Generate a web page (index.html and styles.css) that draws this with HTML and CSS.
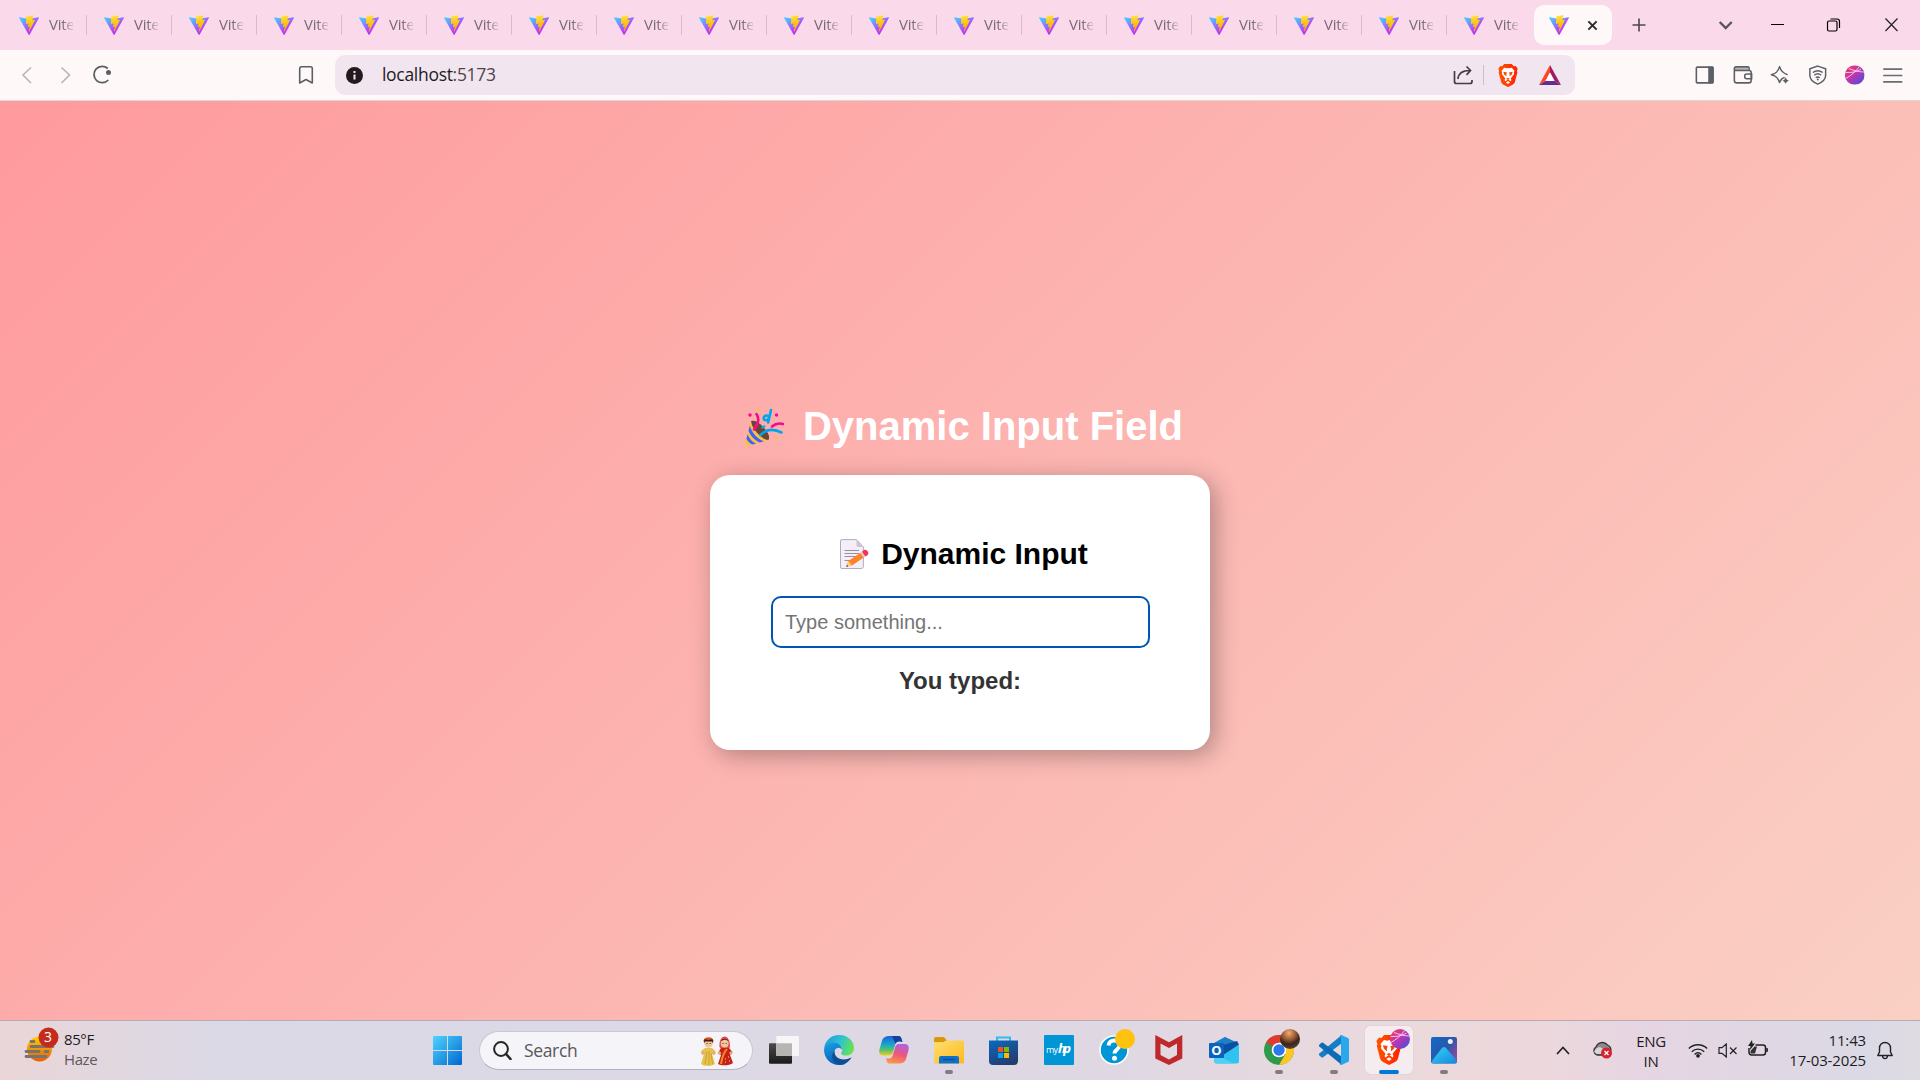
FILE: index.html
```html
<!DOCTYPE html>
<html lang="en">
<head>
<meta charset="utf-8">
<title>Dynamic Input Field</title>
<link rel="stylesheet" href="styles.css">
</head>
<body>
<svg class="defs" aria-hidden="true">
  <defs>
    <linearGradient id="va" x1="0" y1=".08" x2=".58" y2=".78"><stop stop-color="#41d1ff"/><stop offset="1" stop-color="#bd34fe"/></linearGradient>
    <linearGradient id="vb" x1=".43" y1=".02" x2=".5" y2=".89"><stop stop-color="#ffea83"/><stop offset=".083" stop-color="#ffdd35"/><stop offset="1" stop-color="#ffa800"/></linearGradient>
    <linearGradient id="orb" x1="0" y1="0" x2="1" y2="1"><stop stop-color="#ff3c5c"/><stop offset=".5" stop-color="#b637b4"/><stop offset="1" stop-color="#394fe0"/></linearGradient>
    <linearGradient id="win" x1="0" y1="0" x2="1" y2="1"><stop stop-color="#4fd4ff"/><stop offset="1" stop-color="#0067cf"/></linearGradient>
    <linearGradient id="brv" x1="0" y1="0" x2="1" y2="0"><stop stop-color="#ff5500"/><stop offset="1" stop-color="#ff2000"/></linearGradient>
    <symbol id="vite" viewBox="0 0 256 257">
      <path fill="url(#va)" d="M255.153 37.938L134.897 252.976c-2.483 4.44-8.862 4.466-11.382.048L.875 37.958c-2.746-4.814 1.371-10.646 6.827-9.67l120.385 21.517a6.537 6.537 0 0 0 2.322-.004l117.867-21.483c5.438-.991 9.574 4.796 6.877 9.62Z"/>
      <path fill="url(#vb)" d="M185.432.063L96.44 17.501a3.268 3.268 0 0 0-2.634 3.014l-5.474 92.456a3.268 3.268 0 0 0 3.997 3.378l24.777-5.718c2.318-.535 4.413 1.507 3.936 3.838l-7.361 36.047c-.495 2.426 1.782 4.5 4.151 3.78l15.304-4.649c2.372-.72 4.652 1.36 4.15 3.788l-11.698 56.621c-.732 3.542 3.979 5.473 5.943 2.437l1.313-2.028l72.516-144.72c1.215-2.423-.88-5.186-3.54-4.672l-25.505 4.922c-2.396.462-4.435-1.77-3.759-4.114l16.646-57.705c.677-2.35-1.37-4.583-3.769-4.113Z"/>
    </symbol>
    <symbol id="brave" viewBox="0 0 26 30">
      <path fill="url(#brv)" d="M8 0h10l2.500 3 2.500-.4L25.600 6l-1 3 .6 2-3.200 12.200c-.5 1.700-1.500 2.800-3 3.800L13 30l-6-3c-1.500-1-2.500-2.100-3-3.800L.8 11l.6-2-1-3L3 2.600l2.500.4z"/>
      <path fill="#fff" d="M8 5l3.500.7 1.500-.6 1.500.6L18 5l3.500 4-1 2 .6 2.200-4.600 5.600 1 2.200-1 1.600-2-1.500-1.500-.6-1.500.6-2 1.500-1-1.600 1-2.200-4.600-5.600.6-2.200-1-2z"/>
      <path fill="#ff4200" d="M7 10.200l4.700.9-.9 2.300.4 3L7.800 13.500zM19 10.200l-4.700.9.900 2.300-.4 3 3.400-2.900zM10.600 19.200l2.400-1.200 2.400 1.200-2.400 1.700z"/>
      <path fill="#fff" d="M10.300 24l2.700-1.700 2.700 1.700-2.700 2z"/>
    </symbol>
    <symbol id="sphere" viewBox="0 0 20 20">
      <circle cx="10" cy="10" r="10" fill="url(#orb)"/>
      <path d="M1 13.500C6 10.500 11 7 14.500 1.500M4 3.500c4 1.500 10 3.500 15.300 3.500M.5 7.500c6 .3 12-.7 16-3.500" fill="none" stroke="#ffd5ec" stroke-width=".9"/>
    </symbol>
  </defs>
</svg>

<header class="tab-strip">
  <div class="tab"><svg class="favicon"><use href="#vite"/></svg><span>Vite</span></div>
  <div class="tab"><svg class="favicon"><use href="#vite"/></svg><span>Vite</span></div>
  <div class="tab"><svg class="favicon"><use href="#vite"/></svg><span>Vite</span></div>
  <div class="tab"><svg class="favicon"><use href="#vite"/></svg><span>Vite</span></div>
  <div class="tab"><svg class="favicon"><use href="#vite"/></svg><span>Vite</span></div>
  <div class="tab"><svg class="favicon"><use href="#vite"/></svg><span>Vite</span></div>
  <div class="tab"><svg class="favicon"><use href="#vite"/></svg><span>Vite</span></div>
  <div class="tab"><svg class="favicon"><use href="#vite"/></svg><span>Vite</span></div>
  <div class="tab"><svg class="favicon"><use href="#vite"/></svg><span>Vite</span></div>
  <div class="tab"><svg class="favicon"><use href="#vite"/></svg><span>Vite</span></div>
  <div class="tab"><svg class="favicon"><use href="#vite"/></svg><span>Vite</span></div>
  <div class="tab"><svg class="favicon"><use href="#vite"/></svg><span>Vite</span></div>
  <div class="tab"><svg class="favicon"><use href="#vite"/></svg><span>Vite</span></div>
  <div class="tab"><svg class="favicon"><use href="#vite"/></svg><span>Vite</span></div>
  <div class="tab"><svg class="favicon"><use href="#vite"/></svg><span>Vite</span></div>
  <div class="tab"><svg class="favicon"><use href="#vite"/></svg><span>Vite</span></div>
  <div class="tab"><svg class="favicon"><use href="#vite"/></svg><span>Vite</span></div>
  <div class="tab last"><svg class="favicon"><use href="#vite"/></svg><span>Vite</span></div>
  <div class="tab active"><svg class="favicon"><use href="#vite"/></svg>
    <svg class="close" viewBox="0 0 12 12"><path d="M1.500 1.500l9 9m0-9l-9 9" stroke="#2b2b2b" stroke-width="2.200"/></svg></div>
  <svg class="new-tab" viewBox="0 0 14 14"><path d="M7 .5v13M.5 7h13" stroke="#4d474b" stroke-width="1.600"/></svg>
  <div class="window-controls">
    <svg viewBox="0 0 48 50"><path d="M18.700 22l6 6 6-6" fill="none" stroke="#5a5459" stroke-width="2.400"/></svg>
    <svg viewBox="0 0 57 50"><path d="M22 24.500h13" stroke="#000" stroke-width="1"/></svg>
    <svg viewBox="0 0 57 50"><path d="M24.500 19h6.500a2.500 2.500 0 0 1 2.500 2.500V28" fill="none" stroke="#000" stroke-width="1.200"/><rect x="21.500" y="21" width="9.500" height="10" rx="1.500" fill="none" stroke="#000" stroke-width="1.200"/></svg>
    <svg viewBox="0 0 57 50"><path d="M22.500 18.500l12 12.500m0-12.500l-12 12.500" stroke="#222" stroke-width="1.200"/></svg>
  </div>
</header>

<nav class="toolbar">
  <div class="nav-buttons">
    <svg viewBox="0 0 38 50"><path d="M23 17.500l-8 7.500 8 8" fill="none" stroke="#bdb6b9" stroke-width="1.700"/></svg>
    <svg viewBox="0 0 38 50"><path d="M15.500 17.500l8 7.500-8 8" fill="none" stroke="#bdb6b9" stroke-width="1.700"/></svg>
    <svg viewBox="0 0 38 50"><path d="M23.800 18.500a8.200 8.200 0 1 0 .5 11.500" fill="none" stroke="#5b6067" stroke-width="1.800"/><circle cx="24.500" cy="22.500" r="2.500" fill="#5b6067"/></svg>
    <svg class="bookmark" viewBox="0 0 38 50"><path d="M12.700 33V18.500a1.700 1.700 0 0 1 1.700-1.700h9.200a1.700 1.700 0 0 1 1.700 1.700V33L19 29.500z" fill="none" stroke="#5b6067" stroke-width="1.600" stroke-linejoin="round"/></svg>
  </div>
  <div class="address">
    <svg class="info" viewBox="0 0 17 17"><circle cx="8.500" cy="8.500" r="8.500" fill="#231a1e"/><path d="M8.500 7.500v5M8.500 4v2" stroke="#f1e6ef" stroke-width="2"/></svg>
    <span class="url">localhost<span class="port">:5173</span></span>
    <svg class="share" viewBox="0 0 20 20"><path d="M1.500 6v10.500a2 2 0 0 0 2 2H17a2 2 0 0 0 2-2V15M5 14c.3-5 4-8.500 12-8.500M13.500 1.500l4 4-4 4.300" fill="none" stroke="#453d43" stroke-width="1.700"/></svg>
    <i class="rule"></i>
    <svg class="brave" viewBox="0 0 26 30"><use href="#brave"/></svg>
    <svg class="bat" viewBox="0 0 22 20"><path d="M11 0L0 20l6.500-4L11 7.500z" fill="#ff4724"/><path d="M11 0l11 20-6.500-4L11 7.500z" fill="#9e1f63"/><path d="M0 20h22l-6.500-4h-9z" fill="#662d91"/><path d="M11 7.500L15.500 16h-9z" fill="#fff"/></svg>
  </div>
  <div class="extensions">
    <svg viewBox="0 0 38 50"><rect x="10.500" y="17" width="17" height="16" rx="1" fill="none" stroke="#5b6067" stroke-width="1.600"/><path d="M22.500 16.500h5v17h-5z" fill="#5b6067"/></svg>
    <svg viewBox="0 0 38 50"><path d="M11 17.500h13.500v3H11z" fill="#b3b1b4"/><path d="M10.500 18.500v12a2.500 2.500 0 0 0 2.500 2.500h12a2.500 2.500 0 0 0 2.500-2.500V22.500a2 2 0 0 0-2-2H12a1.500 1.500 0 0 1-1.500-2 1.700 1.700 0 0 1 1.500-1.700h12a1.500 1.500 0 0 1 1.500 1.500v2M28 24h-5a2 2 0 0 0-2 2v.8a2 2 0 0 0 2 2h5z" fill="none" stroke="#5b6067" stroke-width="1.600"/></svg>
    <svg viewBox="0 0 38 50"><path d="M24 27.500c-2.500.6-4 2-5.200 5.200-1.400-4.800-3.300-6.700-8.300-8 5-1.400 6.900-3.300 8.300-8.200 1.400 4.900 3.300 6.800 8.200 8.200" fill="none" stroke="#5b6067" stroke-width="1.500" stroke-linejoin="round"/><path d="M25 27c.7 2.500 1.200 3 3.500 3.700-2.300.7-2.800 1.200-3.500 3.500-.7-2.300-1.200-2.800-3.500-3.500 2.300-.7 2.800-1.200 3.500-3.700z" fill="#5b6067"/></svg>
    <svg viewBox="0 0 38 50"><path d="M19 16l8 2.800v6.500c0 4.400-3.300 7-8 9-4.700-2-8-4.600-8-9v-6.500zM14 22.500c3-2.300 7-2.300 10 0M15.500 25.200c2-1.700 5-1.700 7 0M17 27.800c1.200-1 2.800-1 4 0" fill="none" stroke="#5b6067" stroke-width="1.500"/><circle cx="19" cy="29.500" r="1" fill="#5b6067"/></svg>
    <svg viewBox="0 0 38 50"><use href="#sphere" x="9" y="15" width="20" height="20"/></svg>
    <svg viewBox="0 0 38 50"><path d="M10 19h18M10 25.500h18M10 32h18" stroke="#686c72" stroke-width="1.700" stroke-linecap="round"/></svg>
  </div>
</nav>

<main class="page">
  <h1>
    <svg class="party" viewBox="0 0 39 38">
      <path d="M6 13.500c2-1.800 8 1 12.500 6s7 10.500 4.500 12.500z" fill="#6d4534"/>
      <path d="M6 13.500L.2 34.500c-.6 2.300.8 3.600 3 3L24 32c-5 .500-18-10-18-18.500z" fill="#f9c23c"/>
      <path d="M4.800 17.500c1.500 6.500 8 14 14 15.800l-4 1.200C9.500 32.500 4.500 26.500 3.500 22.500zM2.600 26.200c1.300 4 4.400 7.500 8.400 9.300l-3.600 1c-2.700-1.200-5-3.500-6-5.800z" fill="#3f5fff"/>
      <path d="M6.300 13.200c3-1.500 8 1.500 12.500 6.500s6.500 9.800 4.500 12c-4 1.500-17-10-17-18.500z" fill="#6d4534"/>
      <path d="M11.500 6c3 4.500 1.500 10.500-2.500 15.500M27 18.500c3-2.600 7-3.500 11-2.500" fill="none" stroke="#f70a8d" stroke-width="2.600" stroke-linecap="round"/>
      <path d="M26 2l-2.800 12.500M24 9c-1.500-2.500-5-1.500-5.300 1-.2 2.600 3 3.200 5 .5M15.500 27c6-6 12.500-7 21-2.500M17.500 19.500l1.500-1" fill="none" stroke="#00a6ed" stroke-width="2.600" stroke-linecap="round"/>
      <g fill="#f70a8d"><circle cx="5" cy="7" r="1.700"/><circle cx="31.500" cy="7" r="1.700"/></g><g fill="#f9c23c"><circle cx="13" cy="1.500" r="1.600"/><circle cx="31" cy="29.500" r="1.600"/></g>
    </svg>
    <span>Dynamic Input Field</span>
  </h1>
  <section class="card">
    <h2>
      <svg class="memo" viewBox="0 0 29 30">
        <path d="M2 .6h14.500L23.400 8v19.500a2 2 0 0 1-2 2H2a1.500 1.500 0 0 1-1.500-1.500V2A1.500 1.500 0 0 1 2 .6z" fill="#f3eef8" stroke="#b4acbc"/>
        <path d="M16.500.8L23.300 8h-5a1.800 1.800 0 0 1-1.800-1.800z" fill="#cdc4d6"/>
        <path d="M4.500 11.500h14.500M4.500 14.500h14.500M4.500 17.500h11M4.500 21.500h6" stroke="#998ea4" stroke-width="1"/>
        <path d="M6.500 27.500l1.800-5.500L20.500 13.800l3.300 4.700L12 26.500z" fill="#ff822d"/><path d="M8.300 22l3.700 4.500-5.500 1.200z" fill="#ffce7c"/><path d="M6.900 25.800l1.400 1.500-1.900.6z" fill="#402a32"/>
        <path d="M20.500 13.800l3.300 4.700 1.600-1.100-3.200-4.800z" fill="#d3d3d3"/><path d="M22 12.700l2-1.600c2.400-1.500 5.800 2.800 3.700 4.800l-2.400 1.600z" fill="#f8315c"/>
      </svg>
      <span>Dynamic Input</span>
    </h2>
    <input class="field" type="text" placeholder="Type something...">
    <p class="typed">You typed:</p>
  </section>
</main>

<footer class="taskbar">
  <div class="weather">
    <svg viewBox="0 0 36 48"><defs><linearGradient id="sun" x1="0" y1="0" x2="0" y2="1"><stop stop-color="#ffd000"/><stop offset="1" stop-color="#e85b0c"/></linearGradient></defs>
      <circle cx="15.500" cy="23" r="12.500" fill="url(#sun)"/><path d="M7 15.500h3M7 20.500h22M2 25.500h13M21 25.500h3M2 30.500h20" stroke="#77736f" stroke-width="2.800" stroke-linecap="round"/>
      <circle cx="24.500" cy="11.500" r="10" fill="#c42b1c"/></svg>
    <b class="count">3</b>
    <div class="conditions"><span>85°F</span><span class="muted">Haze</span></div>
  </div>
  <div class="dock">
    <svg class="start" viewBox="0 0 29 29"><path d="M1 0h13v14H0V1a1 1 0 0 1 1-1zM15 0h13a1 1 0 0 1 1 1v13H15zM0 15h14v14H1a1 1 0 0 1-1-1zM15 15h14v13a1 1 0 0 1-1 1H15z" fill="url(#win)"/></svg>
    <div class="search">
      <svg class="lens" viewBox="0 0 19 19"><circle cx="8" cy="8" r="6.900" fill="none" stroke="#252525" stroke-width="2"/><path d="M13 13l4.500 5" stroke="#252525" stroke-width="2.600" stroke-linecap="round"/></svg>
      <span>Search</span>
      <svg class="dolls" viewBox="0 0 32 31">
        <path d="M2.500 5.500C3 1 12 1 12.500 5.500L12 8H3z" fill="#d2571a"/><path d="M3 6h9v2H3z" fill="#4a1811"/><circle cx="7.500" cy="8.500" r="4.200" fill="#f0c69c"/><path d="M3.200 4.500h8.600v2H3.200z" fill="#4a1811"/><path d="M5.500 8.500h1M8.700 8.500h1" stroke="#333"/>
        <path d="M4 13h7l3.500 3-1.200 4-2.300-1 3 10c-3 2.500-11 2.500-14 0l3-10-2 1-1-4z" fill="#e7c34d"/><path d="M6 17l-2 12M8 16v14M10 18l1.500 11" stroke="#c8982f" stroke-width=".8"/><path d="M0 18l2-2 2 2-2 2zM11 18l2-2 2 2-2 2z" fill="#e8a878"/>
        <path d="M18.500 12c-1-14 11-14 10.500 0l-2 3h-6z" fill="#e34a4b"/><circle cx="23.700" cy="8.500" r="3.900" fill="#f0c69c"/><path d="M20 6c1-3 6.500-3 7.500 0l-3.500-1.500z" fill="#52231b"/><path d="M21.500 8.500h1M24.700 8.500h1" stroke="#333"/>
        <path d="M20 13h8l3.500 4-2.500 3 3 8c-3 2.500-11.500 3.300-15 1l3-9-3-2z" fill="#c81f16"/><path d="M26 14c-4 4-5 9-6 15" stroke="#f08b24" stroke-width="2" fill="none"/><path d="M24 24h1M27 22h1M28 26h1M24 27h1" stroke="#ffd26c"/><path d="M16.500 18l2-2 2 2-2 2zM28 18l2-2 2 2-2 2z" fill="#e8a878"/>
      </svg>
    </div>
    <div class="apps">
      <div class="app"><svg viewBox="0 0 48 48"><defs><linearGradient id="tv" x1="0" y1="0" x2="0" y2="1"><stop stop-color="#4b4b48"/><stop offset="1" stop-color="#1b1b1b"/></linearGradient></defs><rect x="9" y="17.300" width="23" height="20.400" rx="1" fill="url(#tv)"/><rect x="16.300" y="10" width="22.700" height="20" rx="1" fill="#f6f6f6"/><path d="M16.300 17.300H32V30H16.300z" fill="#b6b5b4"/></svg></div>
      <div class="app"><svg viewBox="0 0 48 48"><defs><linearGradient id="e1" x1="0" y1=".3" x2="1" y2=".6"><stop stop-color="#1b9de2"/><stop offset=".5" stop-color="#2dc3cf"/><stop offset="1" stop-color="#6be350"/></linearGradient><linearGradient id="e2" x1="0" y1="0" x2=".4" y2="1"><stop stop-color="#1ba1e6"/><stop offset="1" stop-color="#0c5cb5"/></linearGradient></defs>
        <path d="M9 24C9.200 15 16 9 24 9c9.500 0 15 6.500 15 13 0 5-3.500 7.500-8 7.500-4 0-5.500-1.600-4.600-3 1.500-2.300 1.100-5.500-2.400-7.300C18 16 10 18 9 24z" fill="url(#e1)"/>
        <path d="M9 23.500c1-4.500 5-7 9-7 4.800 0 9 3 9 7.500-1-3-5.800-3.500-7.300.5-2.100 6 4.300 13 11.300 13-2 1-4.400 1.500-7 1.500-8.500 0-15-6.700-15-15.500z" fill="url(#e2)"/><path d="M19.500 25c-.5 7 7.500 11 17 6.500-1.500 3-6 7-11 7.300-7-.3-11-9-6-13.800z" fill="#0d4f97"/></svg></div>
      <div class="app"><svg viewBox="0 0 48 48"><defs><linearGradient id="c1" x1="0" y1="0" x2="0" y2="1"><stop stop-color="#1a63d6"/><stop offset=".45" stop-color="#18a7cd"/><stop offset=".75" stop-color="#64c55b"/><stop offset="1" stop-color="#f4cb22"/></linearGradient><linearGradient id="c2" x1=".6" y1="0" x2=".3" y2="1"><stop stop-color="#b061e0"/><stop offset=".5" stop-color="#ef5779"/><stop offset="1" stop-color="#fa9a44"/></linearGradient></defs>
        <path d="M19.500 10H28c3 0 3 2 4 5h-3c-2.500 0-3.500 2-4 4l-2 7c-.6 2-1.500 3.500-4 3.500h-6c-4 0-4.500-4-3-8l2-7c1-3 3.500-4.500 7.500-4.500z" fill="url(#c1)"/><path d="M22 10h6c3 0 3.500 2 4.500 6-4-1.500-6.500 0-7 2z" fill="#16409f"/>
        <path d="M28.500 37.500H20c-3 0-3-2-4-5h3c2.500 0 3.500-2 4-4l2-7c.6-2 1.500-3.500 4-3.500h6c4 0 4.500 4 3 8l-2 7c-1 3-3.500 4.500-7.500 4.500z" fill="url(#c2)"/></svg></div>
      <div class="app"><svg viewBox="0 0 48 48"><defs><linearGradient id="fo" x1="0" y1="0" x2="1" y2="1"><stop stop-color="#ffdf74"/><stop offset="1" stop-color="#fdb91a"/></linearGradient></defs><path d="M9 13a2 2 0 0 1 2-2h8l3 3.500-3 2H9z" fill="#d9970a"/><path d="M9 16.300h9l3-1.800h17a1 1 0 0 1 1 1v21a1 1 0 0 1-1 1H9z" fill="url(#fo)"/><path d="M14 37.500V32a2 2 0 0 1 2-2h16a2 2 0 0 1 2 2v5.500z" fill="#0f70c9"/><path d="M18 33.500h12" stroke="#0b4f92" stroke-width="1.300"/></svg><i class="dot"></i></div>
      <div class="app"><svg viewBox="0 0 48 48"><defs><linearGradient id="st" x1="0" y1="0" x2=".5" y2="1"><stop stop-color="#0a6ac1"/><stop offset="1" stop-color="#243d70"/></linearGradient></defs><path d="M17 16v-4.500h13V16" fill="none" stroke="#2cbef0" stroke-width="2"/><path d="M9 14.500h29V35a4 4 0 0 1-4 4H13a4 4 0 0 1-4-4z" fill="url(#st)"/><path d="M18 21h5v5h-5z" fill="#f25022"/><path d="M24 21h5v5h-5z" fill="#7fba00"/><path d="M18 27h5v5h-5z" fill="#00a4ef"/><path d="M24 27h5v5h-5z" fill="#ffb900"/></svg></div>
      <div class="app"><svg viewBox="0 0 48 48"><rect x="9" y="9" width="30" height="30" rx="1" fill="#0096d6"/><text class="hp-my" x="11" y="27" textLength="12">my</text><text class="hp-hp" x="23" y="27" textLength="13">hp</text></svg></div>
      <div class="app"><svg viewBox="0 0 48 48"><circle cx="24" cy="24" r="14" fill="#0096d6" stroke="#fff" stroke-width="1.600"/><path d="M18.500 19.500c.5-7 11.500-6.500 11 0-.2 4-5 4-5 8" fill="none" stroke="#fff" stroke-width="4"/><circle cx="24.500" cy="32.300" r="2.500" fill="#fff"/><circle cx="35" cy="13" r="10" fill="#ffc20e"/></svg></div>
      <div class="app"><svg viewBox="0 0 48 48"><path d="M10.300 9L24 16.200 37.300 9v23.500L24 39l-13.700-6.500zM15.500 17.500V29l8.500 4.500 8-4.500V17.500L24 22z" fill="#c0292c" fill-rule="evenodd"/></svg></div>
      <div class="app"><svg viewBox="0 0 48 48"><path d="M14 17.500L25 11l13 7.500-1 4H14z" fill="#2f91d8"/><path d="M14 17l11-6 12 5.500L24 24z" fill="#1e7fc8"/><path d="M20 20l17-5 2 3.500L24 31z" fill="#0b4f9e"/><path d="M39 18.500V35a2.500 2.500 0 0 1-2.500 2.500H17a3 3 0 0 1-3-2.500z" fill="#2fc3f2"/><path d="M14 28l20 9.500H17a3 3 0 0 1-3-3z" fill="#4fd0f5"/><rect x="9" y="17" width="15" height="15" rx="1" fill="#0a62c0"/><text class="outlook-o" x="16.500" y="29" text-anchor="middle">O</text></svg></div>
      <div class="app"><svg viewBox="0 0 48 48"><circle cx="24" cy="24" r="15" fill="#2d9b4b"/><path d="M24 24L11 16.500A15 15 0 0 1 37 16.500H24z" fill="#df3b30"/><path d="M24 24V16.500h13A15 15 0 0 1 24 39l6.500-11z" fill="#fcc624"/><circle cx="24" cy="24" r="7.300" fill="#fff"/><circle cx="24" cy="24" r="5.700" fill="#2c76ee"/><defs><radialGradient id="av" cx=".45" cy=".2" r=".8"><stop stop-color="#f1ae78"/><stop offset=".45" stop-color="#93542f"/><stop offset=".7" stop-color="#38251e"/><stop offset="1" stop-color="#594338"/></radialGradient></defs><circle cx="35" cy="13" r="10" fill="url(#av)"/></svg><i class="dot"></i></div>
      <div class="app"><svg viewBox="0 0 48 48"><path d="M9.300 27.500q-.7 1 0 1.800l2 1.900q.9.600 1.800 0L31.500 17.500V9.200z" fill="#1180c8"/><path d="M9.300 20.500q-.7-1 0-1.800l2-1.900q.9-.6 1.800 0L31.500 30.500v8.300z" fill="#0d6cb3"/><path d="M31.500 9l6.500 3q1 .5 1 1.500v21q0 1-1 1.500l-6.500 3q-1.300.4-2-.5 1.500.5 1.500-1.500V11q0-2-1.500-1.500.7-.9 2-.5z" fill="#2ba7ee"/></svg><i class="dot"></i></div>
      <div class="app current"><svg viewBox="0 0 48 48"><use href="#brave" x="11" y="9" width="26" height="30"/><use href="#sphere" x="25" y="3" width="20" height="20"/></svg><i class="dot"></i></div>
      <div class="app"><svg viewBox="0 0 48 48"><defs><linearGradient id="ph" x1="0" y1="0" x2="1" y2=".7"><stop stop-color="#0f69ca"/><stop offset=".6" stop-color="#2b57a9"/><stop offset="1" stop-color="#8b4aa0"/></linearGradient><linearGradient id="pm" x1="0" y1="0" x2="1" y2="1"><stop stop-color="#36d0f7"/><stop offset="1" stop-color="#1489dd"/></linearGradient></defs><rect x="11" y="11" width="26" height="26.500" rx="2" fill="url(#ph)"/><path d="M11.500 35.500L22 22q2-2 4 0l10.800 12.500a2 2 0 0 1-1.800 3H13a2 2 0 0 1-1.500-2z" fill="url(#pm)"/><circle cx="30.300" cy="15.500" r="2.500" fill="#e8f1fc"/></svg><i class="dot"></i></div>
    </div>
  </div>
  <div class="tray">
    <svg class="up" viewBox="0 0 14 9"><path d="M1 8l6-6.500L13 8" fill="none" stroke="#222" stroke-width="1.700"/></svg>
    <svg class="cloud" viewBox="0 0 20 18"><path d="M5 14a4.500 4.500 0 0 1-1-8C6 1 12 0 15.500 4c3 1 4 4 3 6.500L14 14z" fill="#8b8b8b" stroke="#333" stroke-width="1.300"/><path d="M2 11c2-5 6-6 9-3l2 5H5z" fill="#d9d6d8"/><circle cx="14.500" cy="12" r="5.500" fill="#d8232e"/><path d="M12.500 10l4 4m0-4l-4 4" stroke="#fff" stroke-width="1.300"/></svg>
    <div class="lang"><span>ENG</span><span>IN</span></div>
    <svg class="wifi" viewBox="0 0 20 15"><path d="M.8 5.500c5-5 13.400-5 18.400 0M3.800 8.700c3.500-3.500 8.900-3.500 12.400 0M6.600 11.400c2-2 4.800-2 6.800 0" fill="none" stroke="#222" stroke-width="1.400"/><circle cx="10" cy="12.800" r="1.900" fill="#222"/></svg>
    <svg class="sound" viewBox="0 0 20 15"><path d="M1 4.700h3L8.300 1v13L4 10.300H1zM12 4.500l6.500 6.500m0-6.500L12 11" fill="none" stroke="#222" stroke-width="1.200"/></svg>
    <svg class="battery" viewBox="0 0 21 17"><path d="M7.500 5H15a2.500 2.500 0 0 1 2.500 2.500v5A2.500 2.500 0 0 1 15 15H3.500A2.500 2.500 0 0 1 1 12.500V8" fill="none" stroke="#222" stroke-width="1.500"/><path d="M18.200 8h1.400q.8 2 0 4h-1.400zM4 0L0 6h2.500L2 10l5-6.500H4.500z" fill="#222"/><path d="M2.500 11l4-4.500H9L7 13.500H2.500z" fill="#333"/></svg>
    <div class="clock"><span>11:43</span><span>17-03-2025</span></div>
    <svg class="bell" viewBox="0 0 16 19"><path d="M.8 14.500L2.500 11V7a5.500 5.500 0 0 1 11 0v4l1.700 3.500zM5.500 15c.5 3.500 4.500 3.500 5 0" fill="none" stroke="#222" stroke-width="1.400" stroke-linejoin="round"/></svg>
  </div>
</footer>
</body>
</html>
```
FILE: styles.css
```css
* { box-sizing: border-box; }
body {
  margin: 0;
  width: 1920px;
  height: 1080px;
  overflow: hidden;
  display: flex;
  flex-direction: column;
  font-family: "Open Sans", "Noto Sans", sans-serif;
}
svg { display: block; flex: none; }
.defs { position: absolute; width: 0; height: 0; }

/* browser tabs */
.tab-strip {
  height: 50px;
  flex: none;
  display: flex;
  align-items: center;
  padding-left: 2px;
  background: #fad9ea;
}
.tab {
  position: relative;
  width: 85px;
  flex: none;
  height: 40px;
  padding-left: 17px;
  display: flex;
  align-items: center;
  gap: 10px;
  font-size: 15px;
  letter-spacing: -.3px;
}
.tab span {
  width: 24px;
  margin-top: -2px;
  overflow: hidden;
  white-space: nowrap;
  background: linear-gradient(90deg, #75676f 55%, #dcc2d0);
  background-clip: text;
  -webkit-background-clip: text;
  color: transparent;
}
.tab::after {
  content: "";
  position: absolute;
  right: 0;
  top: 10px;
  width: 1px;
  height: 20px;
  background: #d3bfca;
}
.tab.last::after, .tab.active::after { display: none; }
.tab.active {
  width: 78px;
  margin-left: 2px;
  padding-left: 15px;
  gap: 18px;
  border-radius: 10px;
  background: #fff8f8;
}
.favicon { width: 20px; height: 20px; }
.close { width: 11px; height: 11px; }
.new-tab { width: 14px; height: 14px; margin-left: 20px; }
.window-controls { display: flex; margin-left: auto; }
.window-controls svg { width: 57px; height: 50px; }
.window-controls svg:first-child { width: 48px; }

/* toolbar */
.toolbar {
  height: 51px;
  flex: none;
  display: flex;
  align-items: flex-start;
  background: #fff8f8;
  border-bottom: 1px solid #dfd5da;
}
.nav-buttons { width: 335px; display: flex; padding: 0 10px 0 8px; }
.nav-buttons svg, .extensions svg { width: 38px; height: 50px; }
.nav-buttons .bookmark { margin-left: auto; }
.address {
  width: 1240px;
  height: 40px;
  margin-top: 5px;
  padding: 0 14px 0 11px;
  display: flex;
  align-items: center;
  border-radius: 10px;
  background: #f1e6ef;
}
.info { width: 17px; height: 17px; margin-top: 1px; }
.url { margin: -2px auto 0 19px; font-size: 17.500px; letter-spacing: -.3px; color: #231a1e; }
.port { color: #51434a; }
.share { width: 20px; height: 20px; }
.rule { width: 1px; height: 20px; margin: 0 14px 0 10px; background: #cabfc8; }
.brave { width: 20px; height: 23px; }
.bat { width: 22px; height: 20px; margin-left: 21px; }
.extensions { display: flex; margin: 0 9px 0 auto; }
.extensions svg { width: 37.500px; }

/* page */
.page {
  flex: 1;
  min-height: 0;
  display: flex;
  flex-direction: column;
  align-items: center;
  padding-top: 302px;
  background: linear-gradient(135deg, #ff9a9e, #fad0c4);
  font-family: Arial, "Liberation Sans", sans-serif;
}
h1, h2 { margin: 0; padding-left: 8px; display: flex; align-items: center; line-height: 46px; white-space: nowrap; }
h1 { font-size: 40px; color: #fff; gap: 19px; }
.party { width: 39px; height: 38px; margin-top: 2px; }
.card {
  width: 500px;
  height: 275px;
  margin-top: 26px;
  padding-top: 61px;
  display: flex;
  flex-direction: column;
  align-items: center;
  border-radius: 20px;
  background: #fff;
  box-shadow: 5px 5px 25px rgba(0, 0, 0, .3);
}
h2 { font-size: 30px; line-height: 36px; color: #000; gap: 12px; }
.memo { width: 29px; height: 30px; }
.field {
  width: 379px;
  height: 52px;
  margin: 24px 0 0 1px;
  padding: 0 12px;
  border: 2px solid #0056b3;
  border-radius: 10px;
  outline: none;
  background: #fff;
  font: 20px Arial, "Liberation Sans", sans-serif;
}
.field::placeholder { color: #757575; }
.typed { margin: 19px 0 0; font-size: 24px; line-height: 28px; font-weight: 700; color: #333; }

/* taskbar */
.taskbar {
  height: 60px;
  flex: none;
  display: flex;
  align-items: center;
  padding-bottom: 1px;
  border-top: 1px solid #b3abb8;
  background: linear-gradient(90deg, #ead6d8 0, #e1d7df 110px, #dbd9e6 220px, #dcd8e5 620px, #dfd8e3 1120px, #ecd9dc 1420px, #ecd8dc 1540px, #e6d5e2 1640px, #dbd9e5 1860px, #dedbe2 100%);
}
.weather { position: relative; width: 433px; display: flex; padding-left: 24px; }
.weather svg { width: 36px; height: 48px; }
.count {
  position: absolute;
  left: 38px;
  top: 1px;
  width: 20px;
  line-height: 20px;
  text-align: center;
  font-size: 14px;
  font-weight: 400;
  color: #fff;
}
.conditions, .lang, .clock { display: flex; flex-direction: column; font-size: 15px; line-height: 20px; color: #1d1d1d; }
.conditions { margin: 3px 0 0 4px; letter-spacing: -.4px; }
.muted { color: #5d585d; }
.dock { display: flex; align-items: center; }
.start { width: 29px; height: 29px; }
.search {
  width: 274px;
  height: 39px;
  margin-left: 17px;
  padding: 0 19px 0 13px;
  display: flex;
  align-items: center;
  border: 1px solid #cbc6d1;
  border-bottom-color: #b5b1bd;
  border-radius: 20px;
  background: #f5f4f9;
  font-size: 17.500px;
  letter-spacing: -.35px;
  color: #585858;
}
.search span { margin: -1px auto 0 12px; }
.lens { width: 19px; height: 19px; }
.dolls { width: 32px; height: 31px; }
.apps { display: flex; gap: 7px; margin-left: 7px; }
.app { width: 48px; height: 48px; display: flex; flex-direction: column; align-items: center; border-radius: 5px; }
.app svg { width: 48px; height: 48px; overflow: visible; }
.dot { width: 8px; height: 4px; margin-top: -4px; border-radius: 2px; background: #827b81; }
.current { background: #f5ecef; box-shadow: 0 0 1px #bcaeb2; }
.current .dot { width: 20px; background: #0078d7; }
.hp-my { font: 9px "Open Sans", sans-serif; fill: #fff; }
.hp-hp { font: italic 700 13px "Open Sans", sans-serif; fill: #fff; }
.outlook-o { font: 700 13px "Open Sans", sans-serif; fill: #fff; }
.tray { display: flex; align-items: center; margin-left: auto; padding-right: 27px; }
.up { width: 14px; height: 9px; }
.cloud { width: 20px; height: 18px; margin-left: 22px; }
.lang { width: 38px; margin: 2px 0 0 20px; align-items: center; letter-spacing: -.3px; }
.wifi { width: 20px; height: 15px; margin-left: 18px; }
.sound { width: 20px; height: 15px; margin-left: 10px; }
.battery { width: 21px; height: 17px; margin: -3px 0 0 10px; }
.clock { width: 90px; margin-left: 7px; align-items: flex-end; letter-spacing: -.15px; }
.bell { width: 16px; height: 19px; margin-left: 11px; }
```
